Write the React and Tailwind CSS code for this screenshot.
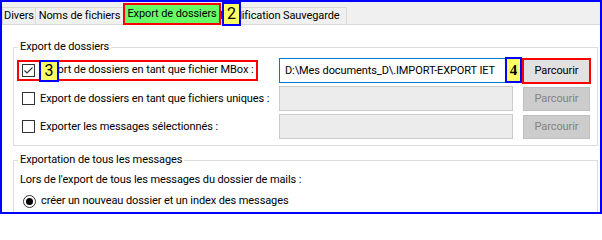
import React from "react";

function CheckBox({ checked }) {
  return (
    <svg width="13" height="13" viewBox="0 0 13 13" className="shrink-0">
      <rect x="0.5" y="0.5" width="12" height="12" fill="#ffffff" stroke="#333333" />
      {checked && (
        <path d="M2.5 6.5 L5 9 L10.5 3.5" fill="none" stroke="#333333" strokeWidth="1.1" />
      )}
    </svg>
  );
}

function Radio() {
  return (
    <svg width="13" height="13" viewBox="0 0 13 13" className="shrink-0">
      <circle cx="6.5" cy="6.5" r="6" fill="#ffffff" stroke="#333333" />
      <circle cx="6.5" cy="6.5" r="3.5" fill="#000000" />
    </svg>
  );
}

function Tab({ children, className }) {
  return (
    <div
      className={
        "h-[17px] -ml-px border border-b-0 border-[#d9d9d9] bg-[#f0f0f0] flex items-center whitespace-nowrap " +
        (className || "")
      }
    >
      {children}
    </div>
  );
}

export default function App() {
  return (
    <div className="w-[602px] h-[214px] border-2 border-[#0000ff] bg-white overflow-hidden flex flex-col text-[11px] tracking-[-0.1px] leading-[16px] text-black font-['Roboto',sans-serif]">
      {/* tab strip */}
      <div className="relative h-[23px] shrink-0 bg-[#f0f0f0] border-b border-[#d9d9d9] flex items-end">
        <Tab className="ml-0 w-[34px] justify-center">Divers</Tab>
        <Tab className="w-[89px] justify-center">Noms de fichiers</Tab>
        <div className="relative z-10 -ml-px -mb-px h-[22px] w-[98px] border-2 border-[#ff0000] bg-[#66ff66] flex items-center justify-center whitespace-nowrap">
          Export de dossiers
        </div>
        <Tab className="w-[127px] overflow-hidden">
          <span className="-ml-[1px]">Modification Sauvegarde</span>
        </Tab>
        <div className="absolute z-20 left-[220px] top-0 w-[19px] h-[24px] border-2 border-[#0000ff] bg-[#ffff66] flex items-center justify-center text-[16px]">
          2
        </div>
      </div>

      {/* page */}
      <div className="flex-1 bg-white flex flex-col min-h-0">
        <fieldset className="mt-[14px] ml-[11px] mr-[2px] border border-[#dcdcdc] pt-[3px] pb-[6px]">
          <legend className="ml-[4px] px-[2px] leading-[16px]">Export de dossiers</legend>
          <div className="flex flex-col gap-[3px]">
            {/* row 1 */}
            <div className="flex items-center h-[25px] pl-[8px] pr-[7px]">
              <div className="flex-1 min-w-0">
                <div className="relative inline-flex items-center gap-[5px] h-[21px] -ml-[5px] pl-[3px] pr-[3px] border-2 border-[#ff0000] whitespace-nowrap">
                  <CheckBox checked />
                  <span>Export de dossiers en tant que fichier MBox :</span>
                  <div className="absolute left-[20px] top-[-2px] w-[20px] h-[22px] border-2 border-[#0000ff] bg-[#ffff66] flex items-center justify-center text-[16px] tracking-normal">
                    3
                  </div>
                </div>
              </div>
              <div className="relative w-[234px] h-[25px] border border-[#0078d7] bg-white flex items-center pl-[5px] whitespace-nowrap overflow-visible">
                {"D:\\Mes documents_D\\.IMPORT-EXPORT IET"}
                <div className="absolute left-[225px] top-[-2px] w-[17px] h-[26px] border-2 border-[#0000ff] bg-[#ffff66] flex items-center justify-center text-[15px] font-bold tracking-normal font-['Liberation_Serif',serif]">
                  4
                </div>
              </div>
              <button className="ml-[10px] w-[67px] h-[24px] border border-[#adadad] bg-[#e1e1e1] outline-2 outline-[#ff0000] outline-offset-[-1px] flex items-center justify-center">
                Parcourir
              </button>
            </div>
            {/* row 2 */}
            <div className="flex items-center h-[25px] pl-[8px] pr-[7px]">
              <div className="flex-1 min-w-0 flex items-center gap-[5px] whitespace-nowrap">
                <CheckBox />
                <span>Export de dossiers en tant que fichiers uniques :</span>
              </div>
              <div className="w-[234px] h-[25px] border border-[#cccccc] bg-[#ececec]" />
              <button className="ml-[10px] w-[67px] h-[24px] border border-[#bfbfbf] bg-[#cccccc] text-[#838383] flex items-center justify-center">
                Parcourir
              </button>
            </div>
            {/* row 3 */}
            <div className="flex items-center h-[25px] pl-[8px] pr-[7px]">
              <div className="flex-1 min-w-0 flex items-center gap-[5px] whitespace-nowrap">
                <CheckBox />
                <span>Exporter les messages sélectionnés :</span>
              </div>
              <div className="w-[234px] h-[25px] border border-[#cccccc] bg-[#ececec]" />
              <button className="ml-[10px] w-[67px] h-[24px] border border-[#bfbfbf] bg-[#cccccc] text-[#838383] flex items-center justify-center">
                Parcourir
              </button>
            </div>
          </div>
        </fieldset>

        <fieldset className="mt-[6px] ml-[11px] mr-[2px] border border-[#dcdcdc] pt-[4px] pb-[12px] shrink-0">
          <legend className="ml-[4px] px-[2px] leading-[16px]">Exportation de tous les messages</legend>
          <div className="pl-[6px] whitespace-nowrap">Lors de l'export de tous les messages du dossier de mails :</div>
          <div className="mt-[5px] pl-[9px] flex items-center gap-[5px] whitespace-nowrap">
            <Radio />
            <span>créer un nouveau dossier et un index des messages</span>
          </div>
        </fieldset>
      </div>
    </div>
  );
}
